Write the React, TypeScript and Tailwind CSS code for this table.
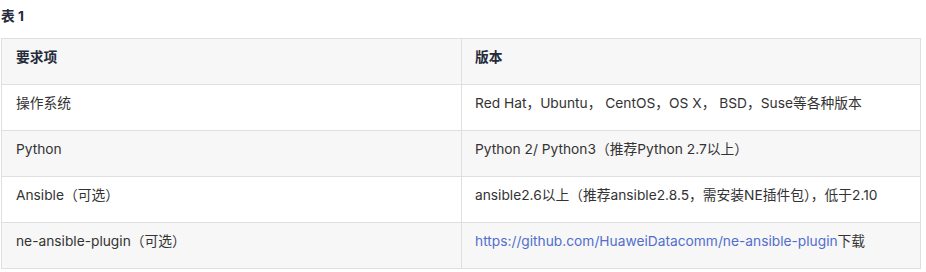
import React from 'react';

const rows = [
  { item: '操作系统', version: 'Red Hat，Ubuntu， CentOS，OS X， BSD，Suse等各种版本' },
  { item: 'Python', version: 'Python 2/ Python3（推荐Python 2.7以上）' },
  { item: 'Ansible（可选）', version: 'ansible2.6以上（推荐ansible2.8.5，需安装NE插件包），低于2.10' },
];

const cell = 'h-[46px] border border-[#dfdfdf] pt-[8px] pb-[16px] text-left align-top';

const App: React.FC = () => {
  return (
    <div
      className="w-[926px] h-[272px] bg-white text-[13.75px] leading-[20px] text-[#333] overflow-hidden"
      style={{ fontFamily: 'Inter, "Noto Sans CJK SC", sans-serif' }}
    >
      <p className="font-bold pt-[6px] pl-[1px] text-[#252b3a]">表 1</p>
      <table className="mt-[12px] ml-[1px] w-[920px] border-collapse table-fixed">
        <thead>
          <tr className="bg-[#f7f7f7]">
            <th className={`${cell} w-[460px] px-[14px] font-semibold text-[#252b3a]`}>要求项</th>
            <th className={`${cell} px-[13px] font-semibold text-[#252b3a]`}>版本</th>
          </tr>
        </thead>
        <tbody>
          {rows.map((r, i) => (
            <tr key={i} className={i % 2 === 1 ? 'bg-[#f7f7f7]' : 'bg-white'}>
              <td className={`${cell} px-[14px]`}>{r.item}</td>
              <td className={`${cell} px-[13px]`}>{r.version}</td>
            </tr>
          ))}
          <tr className="bg-[#f7f7f7]">
            <td className={`${cell} px-[14px]`}>ne-ansible-plugin（可选）</td>
            <td className={`${cell} px-[13px]`}>
              <a href="#" className="text-[#526ecc]">https://github.com/HuaweiDatacomm/ne-ansible-plugin</a>下载
            </td>
          </tr>
        </tbody>
      </table>
    </div>
  );
};

export default App;
